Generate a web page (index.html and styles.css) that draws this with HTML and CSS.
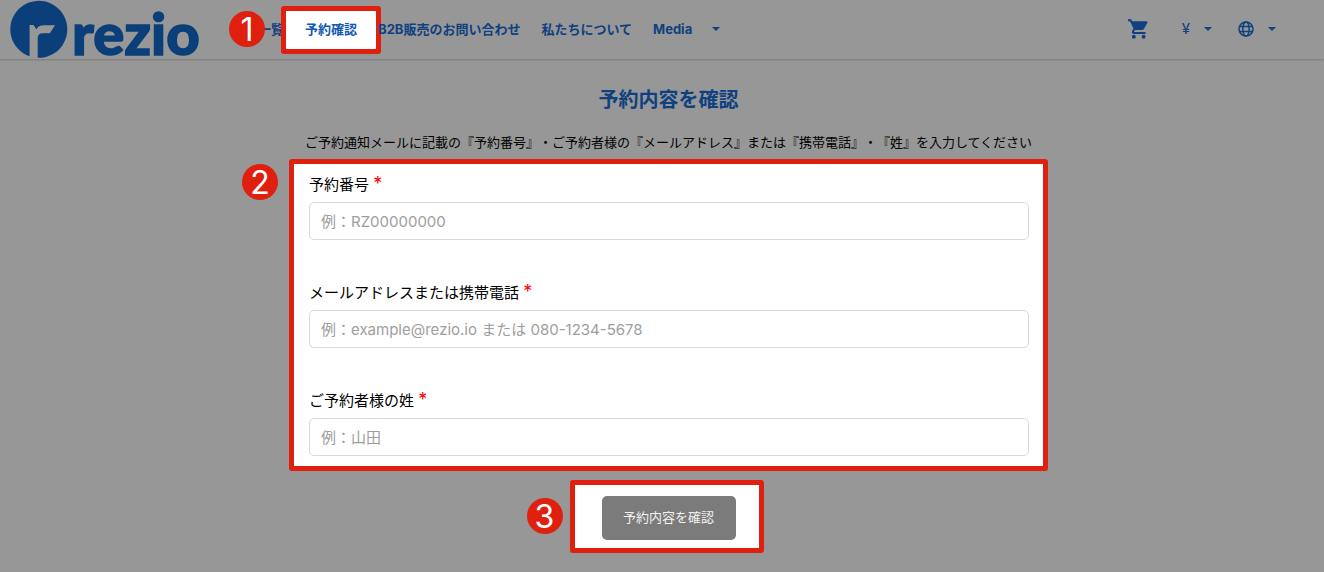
FILE: index.html
```html
<!DOCTYPE html>
<html lang="ja">
<head>
<meta charset="utf-8">
<meta name="viewport" content="width=device-width, initial-scale=1">
<title>予約内容を確認</title>
<link rel="stylesheet" href="styles.css">
</head>
<body>
<header class="header">
  <a class="logo" href="#" aria-label="rezio">
    <svg width="210" height="58" viewBox="0 0 210 58" aria-hidden="true">
      <path d="M20.600 56.300A28.500 28.500 0 1 1 28.700 57.800V38Q28.700 33.300 34 33.300H40.800L46 25.300H35Q29 25.300 27.500 29.500L24.500 25H20.600Z"/>
      <text class="logo-word" x="63" y="55">rezio</text>
    </svg>
  </a>
  <nav class="nav">
    <a class="nav-link" href="#">一覧<span class="badge badge-nav">1</span></a>
    <a class="nav-link nav-link-marked" href="#"><span class="nav-text">予約確認</span></a>
    <a class="nav-link" href="#">B2B販売のお問い合わせ</a>
    <a class="nav-link" href="#">私たちについて</a>
    <button class="menu-button menu-media" type="button">Media
      <svg class="caret" width="8" height="4" viewBox="0 0 8 4" aria-hidden="true"><path d="M0 0h8L4 4z"/></svg>
    </button>
  </nav>
  <div class="tools">
    <button class="menu-button" type="button" aria-label="カート">
      <svg width="20" height="20" viewBox="1 2 20.500 20" aria-hidden="true"><path d="M7 18c-1.100 0-1.990.9-1.990 2S5.900 22 7 22s2-.9 2-2-.9-2-2-2zM1 2v2h2l3.600 7.590-1.350 2.450c-.16.28-.25.61-.25.96 0 1.100.9 2 2 2h12v-2H7.420c-.14 0-.25-.11-.25-.25l.03-.12.9-1.630h7.450c.75 0 1.410-.41 1.750-1.030l3.580-6.490c.08-.14.12-.31.12-.48 0-.55-.45-1-1-1H5.210l-.94-2H1zm16 16c-1.100 0-1.990.9-1.990 2s.89 2 1.990 2 2-.9 2-2-.9-2-2-2z"/></svg>
    </button>
    <button class="menu-button" type="button" aria-label="通貨"><span class="yen">¥</span>
      <svg class="caret" width="8" height="4" viewBox="0 0 8 4" aria-hidden="true"><path d="M0 0h8L4 4z"/></svg>
    </button>
    <button class="menu-button" type="button" aria-label="言語">
      <svg class="globe" width="16" height="16" viewBox="0 0 16 16" aria-hidden="true"><circle cx="8" cy="8" r="7"/><ellipse cx="8" cy="8" rx="3.200" ry="7"/><path d="M1.500 5.500h13M1.500 10.500h13"/></svg>
      <svg class="caret" width="8" height="4" viewBox="0 0 8 4" aria-hidden="true"><path d="M0 0h8L4 4z"/></svg>
    </button>
  </div>
</header>
<main class="main">
  <h1 class="title">予約内容を確認</h1>
  <p class="lead">ご予約通知メールに記載の『予約番号』・ご予約者様の『メールアドレス』または『携帯電話』・『姓』を入力してください</p>
  <form class="form">
    <div class="panel fields">
      <span class="badge badge-fields">2</span>
      <div class="field">
        <label class="label" for="number">予約番号 <span class="required">*</span></label>
        <input class="input" id="number" type="text" placeholder="例：RZ00000000">
      </div>
      <div class="field">
        <label class="label" for="contact">メールアドレスまたは携帯電話 <span class="required">*</span></label>
        <input class="input" id="contact" type="text" placeholder="例：example@rezio.io または 080-1234-5678">
      </div>
      <div class="field">
        <label class="label" for="surname">ご予約者様の姓 <span class="required">*</span></label>
        <input class="input" id="surname" type="text" placeholder="例：山田">
      </div>
    </div>
    <div class="panel action">
      <span class="badge badge-action">3</span>
      <button class="submit" type="submit">予約内容を確認</button>
    </div>
  </form>
</main>
</body>
</html>
```
FILE: styles.css
```css
* {
  box-sizing: border-box;
}

body {
  margin: 0;
  min-height: 100vh;
  background: #979797;
  color: #000;
  font-family: Inter, "Noto Sans CJK JP", sans-serif;
  font-size: 13px;
}

.header {
  display: flex;
  align-items: center;
  height: 59px;
  padding: 0 48px 2px 9px;
  box-shadow: 0 1px 2px rgba(0, 0, 0, 0.2);
  color: #0f4080;
}

.logo {
  display: block;
  width: 249px;
  flex: none;
}

.logo svg {
  display: block;
  overflow: visible;
  fill: #0a3f7a;
}

.logo-word {
  font-family: Lato, sans-serif;
  font-size: 58px;
  font-weight: 900;
  stroke: #0a3f7a;
  stroke-width: 1.5px;
}

.nav {
  display: flex;
  align-items: center;
  gap: 21px;
  white-space: nowrap;
}

.nav-link {
  position: relative;
  color: inherit;
  font-weight: 700;
  line-height: 20px;
  text-decoration: none;
}

.nav-link-marked {
  color: #1259b5;
}

.nav-link-marked::before {
  content: "";
  position: absolute;
  inset: -13px -24px -15px;
  border: 5px solid #df200f;
  border-radius: 3px;
  background: #fff;
}

.nav-text {
  position: relative;
}

.menu-button {
  display: flex;
  align-items: center;
  gap: 14px;
  padding: 0;
  border: 0;
  background: none;
  color: inherit;
  fill: currentColor;
  font: inherit;
  line-height: 20px;
}

.menu-media {
  gap: 20px;
  font-weight: 700;
}

.tools {
  display: flex;
  align-items: center;
  gap: 26px;
  margin-left: auto;
}

.yen {
  width: 16px;
  text-align: right;
  font-size: 15px;
}

.globe {
  fill: none;
  stroke: currentColor;
  stroke-width: 1.5;
}

.badge {
  position: absolute;
  z-index: 1;
  width: 36px;
  height: 36px;
  border-radius: 50%;
  background: #df200f;
  color: #fff;
  font-size: 32px;
  font-weight: 400;
  line-height: 37px;
  text-align: center;
}

.badge-nav {
  top: -8px;
  left: -29px;
}

.badge-fields {
  top: 0;
  left: -52px;
}

.badge-action {
  top: 13px;
  left: -48px;
}

.main {
  padding: 25px 0 19px 13px;
}

.title {
  margin: 0;
  color: #0f4080;
  font-size: 20px;
  font-weight: 700;
  line-height: 32px;
  text-align: center;
}

.lead {
  margin: 16px 0 7px;
  line-height: 20px;
  text-align: center;
  text-spacing-trim: space-all;
}

.form {
  display: flex;
  flex-direction: column;
  align-items: center;
  gap: 9px;
}

.panel {
  position: relative;
  border: 5px solid #df200f;
  border-radius: 3px;
  background: #fff;
}

.fields {
  display: flex;
  flex-direction: column;
  gap: 41px;
  width: 100%;
  max-width: 759px;
  padding: 9px 14px 10px 15px;
}

.field {
  display: flex;
  flex-direction: column;
  gap: 5px;
}

.label {
  font-size: 15px;
  line-height: 24px;
}

.required {
  color: #f00;
  font-size: 18px;
  line-height: 1;
}

.input {
  width: 100%;
  height: 38px;
  padding: 0 11px;
  border: 1px solid #d9d9d9;
  border-radius: 5px;
  background: #fff;
  color: #000;
  font: inherit;
  font-size: 15px;
}

.input::placeholder {
  color: #9e9e9e;
}

.action {
  margin-right: 4px;
  padding: 11px 23px 8px 27px;
}

.submit {
  display: block;
  min-width: 134px;
  height: 44px;
  padding: 0 16px 4px;
  border: 0;
  border-radius: 5px;
  background: #7b7b7b;
  color: #f2f2f2;
  font: inherit;
}
```
